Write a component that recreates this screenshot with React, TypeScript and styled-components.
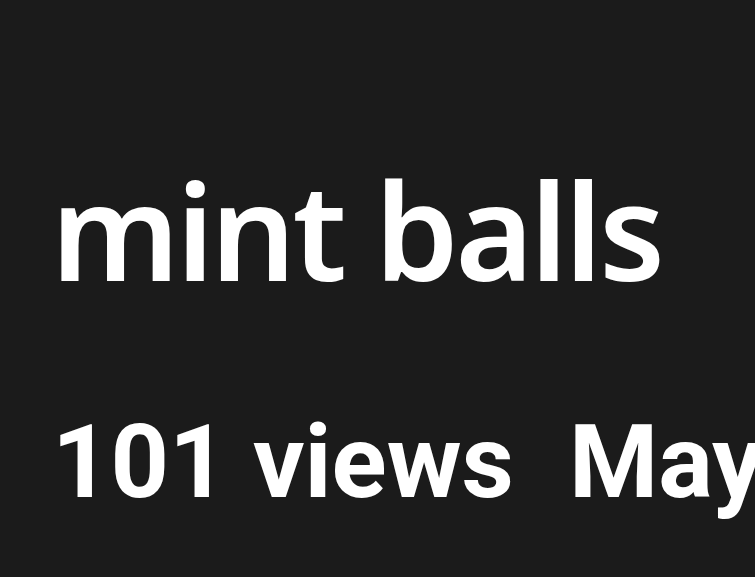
import React from 'react';
import styled, { createGlobalStyle } from 'styled-components';

const GlobalStyle = createGlobalStyle`
  html, body {
    margin: 0;
    padding: 0;
    background: #1b1b1b;
    overflow: hidden;
  }
`;

const Page = styled.div`
  width: 755px;
  height: 577px;
  box-sizing: border-box;
  padding: 149px 0 0 52px;
  background: #1b1b1b;
  color: #ffffff;
  overflow: hidden;
`;

const Title = styled.h1`
  margin: 0 0 0 -1px;
  font-family: "Noto Sans", "Open Sans", sans-serif;
  font-weight: 600;
  font-size: 134px;
  line-height: 160px;
  letter-spacing: -3.5px;
  white-space: nowrap;
`;

const Meta = styled.div`
  display: flex;
  gap: 55px;
  margin-top: 93px;
  font-family: Roboto, "Liberation Sans", sans-serif;
  font-weight: 700;
  font-size: 102px;
  line-height: 120px;
  white-space: nowrap;
`;

export default function App() {
  return (
    <>
      <GlobalStyle />
      <Page>
        <Title>mint balls</Title>
        <Meta>
          <span>101 views</span>
          <span>May 2023</span>
        </Meta>
      </Page>
    </>
  );
}
